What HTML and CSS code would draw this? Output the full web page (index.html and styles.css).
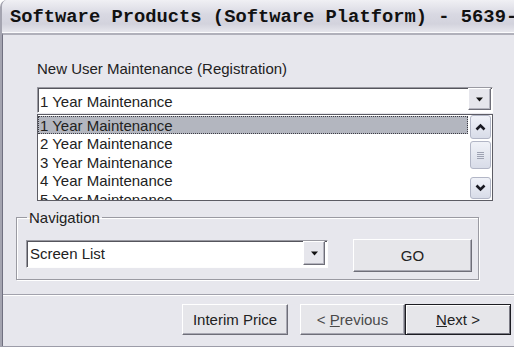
FILE: index.html
```html
<!DOCTYPE html>
<html lang="en">

<head>
    <meta charset="UTF-8">
    <title>Software Products</title>
    <link rel="stylesheet" href="styles.css">
</head>

<body>
    <div class="window">
        <!-- title bar of the dialog -->
        <div class="titlebar">Software Products (Software Platform) - 5639-</div>

        <div class="body">
            <div class="form">
                <div class="section">
                    <div class="field-label">New User Maintenance (Registration)</div>

                    <div class="combo">
                        <span class="combo-text">1 Year Maintenance</span>
                        <span class="drop-btn">
                            <svg width="9" height="5" viewBox="0 0 9 5"><path d="M1 0.5h7L4.5 4.5z" fill="#111"/></svg>
                        </span>
                    </div>

                    <!-- the open dropdown list -->
                    <div class="listbox">
                        <ul class="list-items">
                            <li class="selected">1 Year Maintenance</li>
                            <li>2 Year Maintenance</li>
                            <li>3 Year Maintenance</li>
                            <li>4 Year Maintenance</li>
                            <li>5 Year Maintenance</li>
                        </ul>
                        <div class="scrollbar">
                            <span class="sb-btn sb-up">
                                <svg width="11" height="8" viewBox="0 0 11 8"><path d="M1.5 6.5L5.5 2.5L9.5 6.5" fill="none" stroke="#1a1a22" stroke-width="2.6"/></svg>
                            </span>
                            <span class="sb-thumb">
                                <svg width="9" height="9" viewBox="0 0 9 9"><path d="M1 1.5h7M1 3.5h7M1 5.5h7M1 7.5h7" stroke="#9ea2b2" stroke-width="1"/></svg>
                            </span>
                            <span class="sb-btn sb-down">
                                <svg width="11" height="8" viewBox="0 0 11 8"><path d="M1.5 1.5L5.5 5.5L9.5 1.5" fill="none" stroke="#1a1a22" stroke-width="2.6"/></svg>
                            </span>
                        </div>
                    </div>
                </div>

                <fieldset class="nav-group">
                    <legend>Navigation</legend>
                    <div class="nav-row">
                        <div class="combo combo-nav">
                            <span class="combo-text">Screen List</span>
                            <span class="drop-btn">
                                <svg width="9" height="5" viewBox="0 0 9 5"><path d="M1 0.5h7L4.5 4.5z" fill="#111"/></svg>
                            </span>
                        </div>
                        <button class="btn btn-go">GO</button>
                    </div>
                </fieldset>
            </div>

            <div class="divider"></div>

            <div class="footer">
                <button class="btn btn-interim">Interim Price</button>
                <button class="btn btn-prev">&lt; <u>P</u>revious</button>
                <button class="btn btn-next"><u>N</u>ext &gt;</button>
            </div>
        </div>
    </div>
</body>

</html>
```

FILE: styles.css
```css
* {
    box-sizing: border-box;
}

html,
body {
    margin: 0;
}

body {
    width: 514px;
    height: 348px;
    overflow: hidden;
    background: #fff;
    font-family: "Liberation Sans", Arial, sans-serif;
    font-size: 15px;
    color: #222;
}

.window {
    display: flex;
    flex-direction: column;
    height: 347px;
    border-left: 2px solid #a4a4b0;
    border-top-left-radius: 7px;
    border-bottom: 1px solid #9c9ca8;
    background: #e7e7ed;
    overflow: hidden;
}

.titlebar {
    height: 33px;
    padding: 6px 0 0 8px;
    line-height: 27px;
    background: linear-gradient(#f0f0f4, #d8d8e2 45%, #d3d3dd 75%, #e6e6ec);
    border-bottom: 1px solid #fbfbfd;
    font: bold 18.8px "Liberation Mono", monospace;
    color: #111;
    white-space: nowrap;
}

.body {
    flex: 1;
    border-left: 1px solid #707080;
    border-top: 2px solid #b0b0ba;
}

.form {
    padding: 25px 0 0 13px;
}

.section {
    margin-left: 21px;
    width: 456px;
}

.field-label {
    line-height: 17px;
    margin-bottom: 10px;
}

/* combo boxes */
.combo {
    display: flex;
    height: 26px;
    background: #fff;
    border: 1px solid;
    border-color: #9a9aa2 #fdfdfd #fdfdfd #9a9aa2;
    box-shadow: inset 1px 1px 0 #55555d;
}

.combo-text {
    flex: 1;
    padding: 4px 0 0 2px;
    line-height: 20px;
    white-space: nowrap;
}

.drop-btn {
    display: flex;
    align-items: center;
    justify-content: center;
    width: 23px;
    height: 22px;
    margin-right: 1px;
    background: #e6e6ec;
    border: 1px solid;
    border-color: #fff #6e6e78 #6e6e78 #fff;
    box-shadow: inset -1px -1px 0 #b4b4be;
}

/* open list */
.listbox {
    display: flex;
    height: 87px;
    margin-top: 1px;
    background: #fff;
    border: 1px solid #5c5c64;
}

.list-items {
    flex: 1;
    margin: 0;
    padding: 1px 0 0 0;
    list-style: none;
    overflow: hidden;
}

.list-items li {
    height: 18.4px;
    padding: 1px 0 0 1px;
    line-height: 15.4px;
    border: 1px solid transparent;
    white-space: nowrap;
}

.list-items li.selected {
    background: #b3b6bf;
    border: 1px dotted #3c3c44;
}

.scrollbar {
    display: flex;
    flex-direction: column;
    width: 21px;
    margin: 0 1px 0 2px;
}

.sb-btn,
.sb-thumb {
    display: flex;
    align-items: center;
    justify-content: center;
    background: linear-gradient(#f0f2f8, #d8dce8);
    border: 1px solid #b2b6c6;
    border-radius: 3px;
}

.sb-up {
    height: 24px;
}

.sb-thumb {
    height: 28px;
    margin-top: 2px;
}

.sb-down {
    height: 22px;
    margin-top: auto;
    margin-bottom: 1px;
}

/* navigation group */
.nav-group {
    width: 463px;
    margin: 8px 0 0 0;
    padding: 13px 6px 7px 9px;
    border: 1px solid #9a9aa2;
    box-shadow: inset 1px 1px 0 #fff, 1px 1px 0 #fff;
}

.nav-group legend {
    margin-left: 1px;
    padding: 0 2px;
    line-height: 17px;
}

.nav-row {
    display: flex;
    align-items: flex-start;
    gap: 25px;
}

.combo-nav {
    width: 302px;
    height: 28px;
    margin-top: 1px;
}

.combo-nav .combo-text {
    padding: 3px 0 0 3px;
}

.combo-nav .drop-btn {
    width: 22px;
    height: 24px;
    margin: 0 2px 0 0;
}

/* buttons */
.btn {
    padding: 0;
    font-family: "Liberation Sans", Arial, sans-serif;
    font-size: 15px;
    color: #222;
    background: #e6e6ea;
    border: 1px solid;
    border-color: #fff #6e6e78 #6e6e78 #fff;
    box-shadow: inset -1px -1px 0 #a8a8b2;
}

.btn-go {
    width: 119px;
    height: 33px;
}

.divider {
    height: 2px;
    margin-top: 14px;
    border-top: 1px solid #a2a2ac;
    border-bottom: 1px solid #fff;
}

.footer {
    display: flex;
    justify-content: flex-end;
    padding: 8px 3px 0 0;
}

.footer .btn {
    height: 31px;
}

.btn-interim {
    width: 106px;
    margin-right: 12px;
}

.btn-prev {
    width: 105px;
    color: #4a4a4a;
}

.btn-next {
    width: 106px;
    border: 1px solid #1c1c22;
    box-shadow: inset 1px 1px 0 #fff, inset -1px -1px 0 #7a7a84;
}
```
